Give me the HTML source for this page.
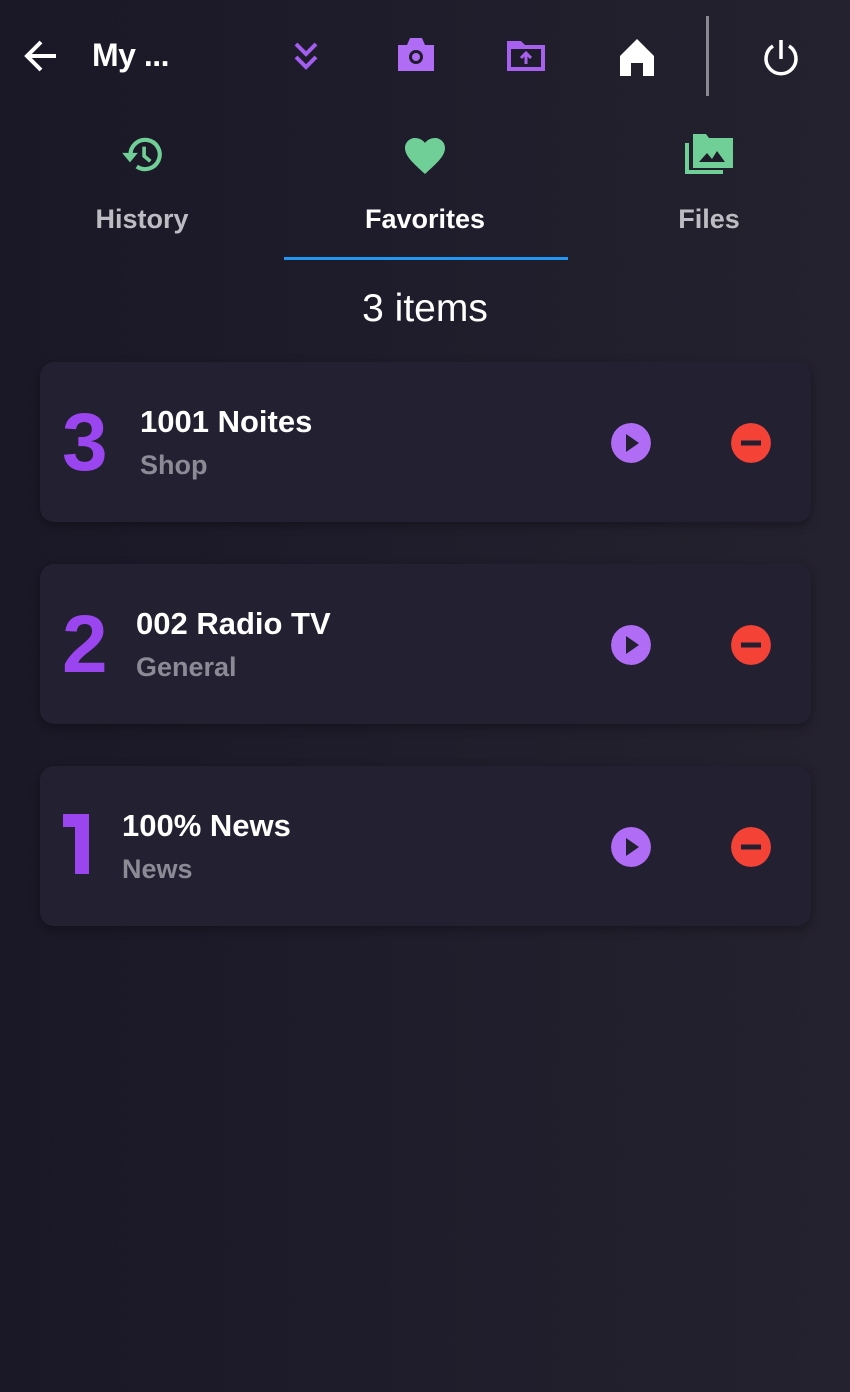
<!DOCTYPE html>
<html><head><meta charset="utf-8"><style>
*{margin:0;padding:0;box-sizing:border-box}
body{width:850px;height:1392px;overflow:hidden;background:linear-gradient(90deg,#1a1826 0%,#1f1d2b 50%,#25222f 100%);font-family:"Liberation Sans",sans-serif;color:#fff;position:relative}
.abs{position:absolute}
.title{left:92px;top:37px;font-size:32px;font-weight:bold;letter-spacing:-0.5px}
.tab{position:absolute;top:204px;width:284px;text-align:center;font-size:27px;font-weight:bold;color:#bdbcc2}
.card{position:absolute;left:40px;width:771px;height:160px;background:#232032;border-radius:14px;box-shadow:0 3px 10px rgba(0,0,0,.35)}
.num{position:absolute;left:22px;top:40px;font-size:82px;font-weight:bold;color:#9b45f0;line-height:82px;letter-spacing:-2px}
.t{position:absolute;top:42px;font-size:31px;font-weight:bold;letter-spacing:0}
.s{position:absolute;top:88px;font-size:27px;font-weight:bold;color:#8c8a94}
.btn{position:absolute;top:61px;width:40px;height:40px;border-radius:50%}
</style></head><body>
<svg class="abs" style="left:22px;top:38px" width="38" height="36" viewBox="0 0 38 36"><path d="M34 18H5M19 4L5 18l14 14" stroke="#fff" stroke-width="4" fill="none"/></svg>
<div class="abs title">My ...</div>
<svg class="abs" style="left:292px;top:40px" width="28" height="32" viewBox="0 0 28 32"><path d="M4 4l10 10 10-10M4 17l10 10 10-10" stroke="#a35ef0" stroke-width="4" fill="none"/></svg>
<svg class="abs" style="left:395px;top:35px" width="42" height="38" viewBox="0 0 42 38"><path d="M3 10h9l3-7h12l3 7h9v26H3z" fill="#b06cf5"/><circle cx="21" cy="22" r="7" fill="#1e1c2a"/><circle cx="21" cy="22" r="4" fill="#b06cf5"/></svg>
<svg class="abs" style="left:505px;top:39px" width="42" height="34" viewBox="0 0 42 34"><path d="M2 2h14l4 4h20v26H2z" fill="#a860ef"/><rect x="6" y="10" width="30" height="18" fill="#1e1c2a"/><path d="M21 25V14M16 19l5-5 5 5" stroke="#a860ef" stroke-width="3" fill="none"/></svg>
<svg class="abs" style="left:618px;top:37px" width="38" height="40" viewBox="0 0 38 40"><path d="M19 2L2 19v20h11V26h12v13h11V19z" fill="#fff"/></svg>
<div class="abs" style="left:706px;top:16px;width:3px;height:80px;background:#8a8891"></div>
<svg class="abs" style="left:760px;top:37px" width="42" height="42" viewBox="0 0 42 42"><path d="M21 3v19" stroke="#fff" stroke-width="3.5"/><path d="M13 9A15 15 0 1 0 29 9" stroke="#fff" stroke-width="3.5" fill="none"/></svg>

<svg class="abs" style="left:119px;top:134px" width="46" height="42" viewBox="0 0 44 40"><path d="M11 20A14 14 0 1 1 17 31" stroke="#6fcf97" stroke-width="4" fill="none"/><path d="M3 18h15l-7.5 9z" fill="#6fcf97"/><path d="M24 12v9l6 5" stroke="#6fcf97" stroke-width="3.5" fill="none"/></svg>
<svg class="abs" style="left:403px;top:136px" width="44" height="40" viewBox="0 0 44 40"><path d="M22 38C10 27 2 20 2 12 2 6 7 2 12 2c4 0 8 2 10 5 2-3 6-5 10-5 5 0 10 4 10 10 0 8-8 15-20 26z" fill="#6fcf97"/></svg>
<svg class="abs" style="left:684px;top:133px" width="52" height="44" viewBox="0 0 52 44"><path d="M1 10v31h38v-4H5V10z" fill="#6fcf97"/><path d="M9 1h13l3 4h24v30H9z" fill="#6fcf97"/><path d="M15 29l8-9 5 6 5-8 8 11z" fill="#1e1c2a"/></svg>
<div class="tab" style="left:0">History</div>
<div class="tab" style="left:283px;color:#fff">Favorites</div>
<div class="tab" style="left:567px">Files</div>
<div class="abs" style="left:284px;top:257px;width:284px;height:3px;background:#2196f3"></div>
<div class="abs" style="left:0;width:850px;top:287px;text-align:center;font-size:39px">3 items</div>

<div class="card" style="top:362px"><div class="num">3</div><div class="t" style="left:100px">1001 Noites</div><div class="s" style="left:100px">Shop</div>
<svg class="btn" style="left:571px" viewBox="0 0 40 40"><circle cx="20" cy="20" r="20" fill="#b06cf5"/><path d="M15 11v18l13-9z" fill="#232032"/></svg>
<svg class="btn" style="left:691px" viewBox="0 0 40 40"><circle cx="20" cy="20" r="20" fill="#f44336"/><rect x="10" y="17.5" width="20" height="5" fill="#232032"/></svg></div>
<div class="card" style="top:564px"><div class="num">2</div><div class="t" style="left:96px">002 Radio TV</div><div class="s" style="left:96px">General</div>
<svg class="btn" style="left:571px" viewBox="0 0 40 40"><circle cx="20" cy="20" r="20" fill="#b06cf5"/><path d="M15 11v18l13-9z" fill="#232032"/></svg>
<svg class="btn" style="left:691px" viewBox="0 0 40 40"><circle cx="20" cy="20" r="20" fill="#f44336"/><rect x="10" y="17.5" width="20" height="5" fill="#232032"/></svg></div>
<div class="card" style="top:766px"><svg class="abs" style="left:22px;top:48px" width="28" height="60" viewBox="0 0 28 60"><path d="M1 0h26v60H13V13H1z" fill="#9b45f0"/></svg><div class="t" style="left:82px">100% News</div><div class="s" style="left:82px">News</div>
<svg class="btn" style="left:571px" viewBox="0 0 40 40"><circle cx="20" cy="20" r="20" fill="#b06cf5"/><path d="M15 11v18l13-9z" fill="#232032"/></svg>
<svg class="btn" style="left:691px" viewBox="0 0 40 40"><circle cx="20" cy="20" r="20" fill="#f44336"/><rect x="10" y="17.5" width="20" height="5" fill="#232032"/></svg></div>
</body></html>
